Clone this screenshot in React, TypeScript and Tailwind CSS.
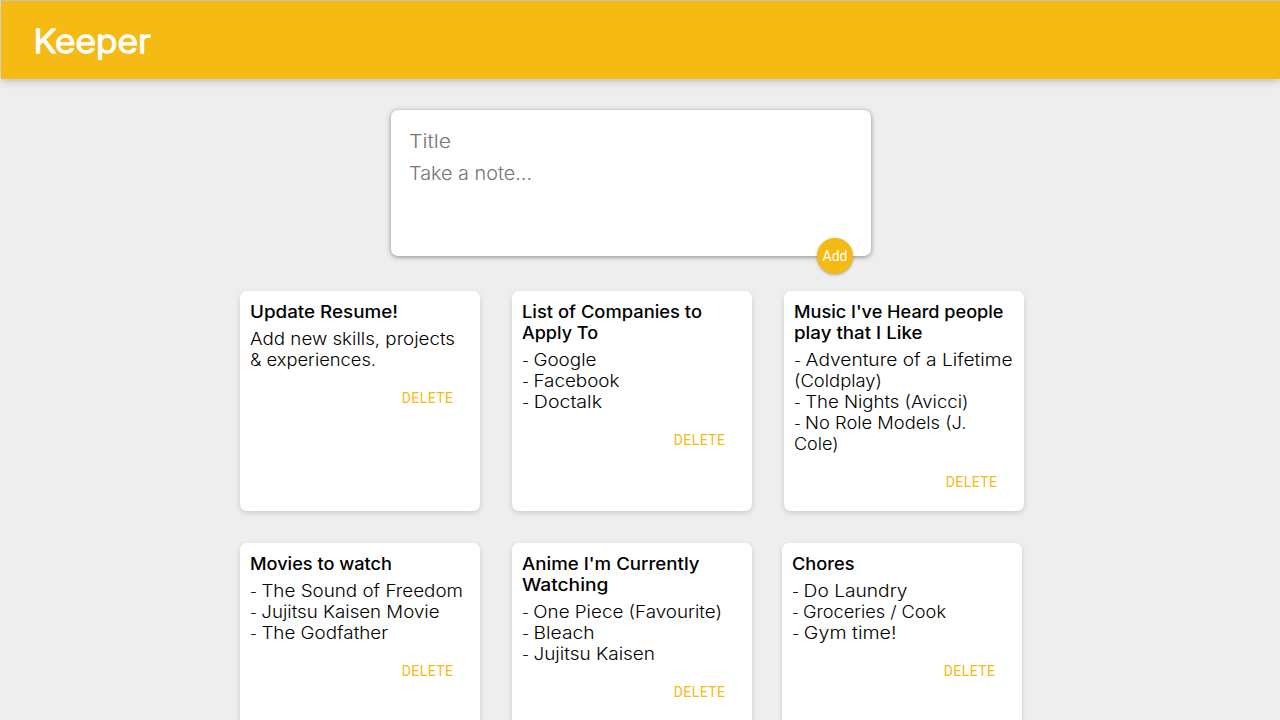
import { useLayoutEffect, useRef, useState } from "react";

type Line = [text: string, width: number];

interface Note {
  title: Line[];
  content: Line[];
  shifted?: boolean;
}

const notes: Note[] = [
  {
    title: [["Update Resume!", 148]],
    content: [["Add new skills, projects", 205], ["& experiences.", 126]],
  },
  {
    title: [["List of Companies to", 180], ["Apply To", 76]],
    content: [["- Google", 74.5], ["- Facebook", 97.5], ["- Doctalk", 80]],
  },
  {
    title: [["Music I've Heard people", 209.5], ["play that I Like", 128.5]],
    content: [
      ["- Adventure of a Lifetime", 218.5],
      ["(Coldplay)", 88],
      ["- The Nights (Avicci)", 174.5],
      ["- No Role Models (J.", 172.5],
      ["Cole)", 44.5],
    ],
  },
  {
    title: [["Movies to watch", 142]],
    content: [
      ["- The Sound of Freedom", 213],
      ["- Jujitsu Kaisen Movie", 189.5],
      ["- The Godfather", 138],
    ],
  },
  {
    title: [["Anime I'm Currently", 177.5], ["Watching", 86.5]],
    content: [["- One Piece (Favourite)", 200], ["- Bleach", 72.5], ["- Jujitsu Kaisen", 133]],
  },
  {
    title: [["Chores", 62.5]],
    content: [["- Do Laundry", 115.5], ["- Groceries / Cook", 154], ["- Gym time!", 104.5]],
    shifted: true,
  },
];

/* One line of text, stretched to a given measure. A leading list dash is set smaller. */
function Fit({ text, width }: { text: string; width: number }) {
  const ref = useRef<HTMLSpanElement>(null);
  const [scale, setScale] = useState(1);
  useLayoutEffect(() => {
    if (ref.current) setScale(width / parseFloat(getComputedStyle(ref.current).width));
  }, [width]);
  const dashed = text.startsWith("- ");
  return (
    <span className="block">
      <span
        ref={ref}
        className="inline-block origin-left whitespace-nowrap align-top"
        style={{ transform: `scaleX(${scale})` }}
      >
        {dashed && <span className="text-[14px] leading-none">{"- "}</span>}
        {dashed ? text.slice(2) : text}
      </span>
    </span>
  );
}

function Header() {
  return (
    <header className="ml-px h-[78px] bg-[#f5ba13] pt-5 pl-[30px] shadow-[0_0_10px_0_rgba(0,0,0,0.3)]">
      <svg width="130" height="45" viewBox="0 0 130 45" aria-label="Keeper">
        <text
          x="2.6"
          y="32"
          textLength="117"
          lengthAdjust="spacingAndGlyphs"
          className="fill-white stroke-white font-['Inter',sans-serif] text-[32px] font-light"
          strokeWidth="1.5"
          strokeLinejoin="round"
        >
          Keeper
        </text>
      </svg>
    </header>
  );
}

function CreateArea() {
  return (
    <form className="relative mt-[31px] ml-[391px] h-[146px] w-[480px] rounded-[7px] bg-white pr-[19px] pl-[18px] pt-5 text-[18.7px] font-[350] leading-6 text-[#757575] shadow-[0_1px_5px_rgb(138,137,137)]">
      <Fit text="Title" width={42} />
      <div className="mt-2">
        <Fit text="Take a note..." width={123} />
      </div>
      <button
        type="button"
        className="absolute right-[18px] -bottom-[18px] size-9 rounded-full bg-[#f5ba13] font-['Roboto',sans-serif] text-[14px] font-[450] leading-9 text-white shadow-[0_1px_3px_rgba(0,0,0,0.3)]"
      >
        Add
      </button>
    </form>
  );
}

function NoteCard({ note }: { note: Note }) {
  return (
    <article
      className={
        "h-[220px] w-60 rounded-[7px] bg-white px-2.5 pt-[11px] text-[17px] leading-[21px] text-black shadow-[0_2px_5px_#ccc]" +
        (note.shifted ? " -ml-0.5" : "")
      }
    >
      <h1 className="mb-1.5 font-medium">
        {note.title.map(([text, width]) => (
          <Fit key={text} text={text} width={width} />
        ))}
      </h1>
      <p className="mb-[9px] font-light">
        {note.content.map(([text, width]) => (
          <Fit key={text} text={text} width={width} />
        ))}
      </p>
      <button
        type="button"
        className="mr-2.5 ml-auto block h-9 w-[65px] text-center font-['Roboto',sans-serif] text-[14px] leading-9 tracking-[0.4px] text-[#f5ba13]"
      >
        DELETE
      </button>
    </article>
  );
}

export default function App() {
  return (
    <div className="h-[720px] w-[1280px] overflow-hidden border-t border-[#c4c4c4] bg-[#eee] font-['Inter',sans-serif]">
      <Header />
      <CreateArea />
      <main className="mt-[35px] ml-60 grid grid-cols-[240px_240px_240px] gap-8">
        {notes.map((note) => (
          <NoteCard key={note.title[0][0]} note={note} />
        ))}
      </main>
    </div>
  );
}
